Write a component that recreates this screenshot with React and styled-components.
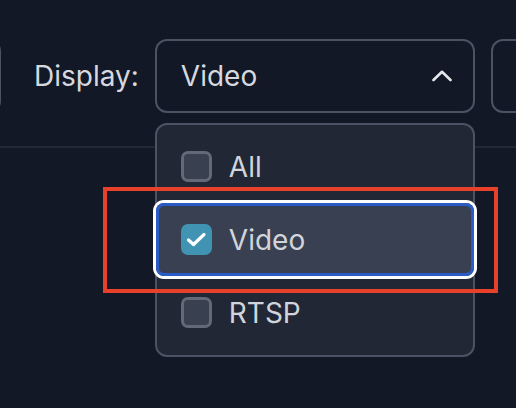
import React from "react";
import styled, { createGlobalStyle } from "styled-components";

const GlobalStyle = createGlobalStyle`
  html, body {
    margin: 0;
    padding: 0;
    background: #121826;
  }
  body {
    font-family: Inter, "Noto Sans", sans-serif;
    color: #d1d5db;
  }
`;

const Page = styled.div`
  position: relative;
  width: 516px;
  height: 408px;
  overflow: hidden;
`;

const Toolbar = styled.div`
  display: flex;
  align-items: center;
  padding: 39px 0 33px;
  border-bottom: 2px solid #222835;
`;

const Control = styled.div`
  flex: none;
  box-sizing: border-box;
  width: ${(p) => p.width}px;
  height: 74px;
  border: 2px solid #4b5263;
  border-radius: 12px;
  margin-left: ${(p) => p.offset || 0}px;
`;

const Label = styled.span`
  flex: none;
  margin: 0 16px 0 33px;
  font-size: 28px;
  line-height: 1;
  color: #d6d9df;
`;

const SelectWrap = styled.div`
  position: relative;
  flex: none;
  margin-right: 16px;
`;

const SelectButton = styled.div`
  box-sizing: border-box;
  width: 320px;
  height: 74px;
  display: flex;
  align-items: center;
  justify-content: space-between;
  padding: 0 21px 0 24px;
  border: 2px solid #4b5263;
  border-radius: 12px;
  font-size: 28px;
  color: #d6d9df;
`;

const Menu = styled.div`
  position: absolute;
  top: 84px;
  left: 0;
  box-sizing: border-box;
  width: 320px;
  padding: 5px 0 6px;
  background: #212735;
  border: 2px solid #4b5263;
  border-radius: 12px;
  z-index: 2;
`;

const Option = styled.div`
  box-sizing: border-box;
  height: 73px;
  display: flex;
  align-items: center;
  gap: 17px;
  padding-left: ${(p) => (p.$active ? 25 : 24)}px;
  margin: 0 ${(p) => (p.$active ? -1 : 0)}px;
  font-size: 28px;
  color: #d1d5db;
  border-radius: 8px;
  background: ${(p) => (p.$active ? "#394051" : "transparent")};
  box-shadow: ${(p) =>
    p.$active ? "inset 0 0 0 3px #2b5cc6, 0 0 0 3px #ffffff" : "none"};
`;

const Box = styled.span`
  flex: none;
  box-sizing: border-box;
  width: 31px;
  height: 31px;
  border-radius: 7px;
  border: 3px solid ${(p) => (p.$checked ? "#4093b2" : "#636977")};
  background: ${(p) => (p.$checked ? "#4093b2" : "#394050")};
  display: flex;
  align-items: center;
  justify-content: center;
`;

const Highlight = styled.div`
  position: absolute;
  left: 103px;
  top: 187px;
  width: 395px;
  height: 106px;
  box-sizing: border-box;
  border: 4px solid #e8412b;
  z-index: 3;
  pointer-events: none;
`;

function ChevronUp() {
  return (
    <svg width="20" height="12" viewBox="0 0 20 12" fill="none">
      <polyline
        points="1.5,10 10,1.8 18.5,10"
        stroke="#e5e7eb"
        strokeWidth="2.6"
        strokeLinecap="round"
        strokeLinejoin="round"
      />
    </svg>
  );
}

function Check() {
  return (
    <svg width="25" height="25" viewBox="0 0 25 25" fill="none">
      <polyline
        points="4.5,13 9.5,17.5 20,7.5"
        stroke="#ffffff"
        strokeWidth="3.2"
        strokeLinecap="round"
        strokeLinejoin="round"
      />
    </svg>
  );
}

const options = [
  { label: "All", checked: false },
  { label: "Video", checked: true },
  { label: "RTSP", checked: false },
];

export default function App() {
  return (
    <Page>
      <GlobalStyle />
      <Toolbar>
        <Control width={40} offset={-39} />
        <Label>Display:</Label>
        <SelectWrap>
          <SelectButton>
            <span>Video</span>
            <ChevronUp />
          </SelectButton>
          <Menu>
            {options.map((o) => (
              <Option key={o.label} $active={o.checked}>
                <Box $checked={o.checked}>{o.checked && <Check />}</Box>
                <span>{o.label}</span>
              </Option>
            ))}
          </Menu>
        </SelectWrap>
        <Control width={100} />
      </Toolbar>
      <Highlight />
    </Page>
  );
}
